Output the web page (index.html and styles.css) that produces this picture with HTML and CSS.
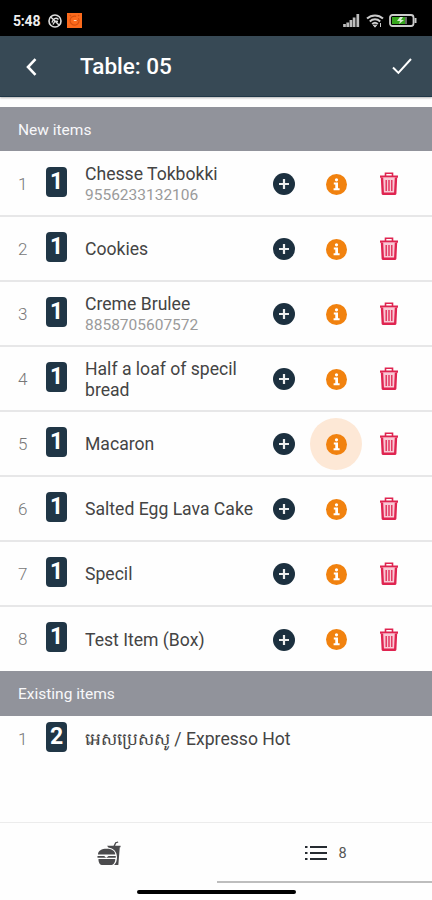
FILE: index.html
```
<!DOCTYPE html>
<html lang="en">
<head>
    <meta charset="UTF-8">
    <meta name="viewport" content="width=device-width, initial-scale=1.0">
    <title>Table: 05</title>
    <link rel="stylesheet" href="styles.css">
</head>
<body>
    <svg class="sprite" width="0" height="0">
        <symbol id="icon-add" viewBox="0 0 22 22">
            <circle cx="11" cy="11" r="11" fill="#1c303f"/>
            <path d="M11 6v10M6 11h10" stroke="#eee" stroke-width="2.2"/>
        </symbol>
        <symbol id="icon-info" viewBox="0 0 21 21">
            <circle cx="10.5" cy="10.5" r="10.5" fill="#f1820f"/>
            <circle cx="10.5" cy="5.8" r="1.6" fill="#fff"/>
            <path d="M7.8 8.6h4.2v5.6h1.6v2h-6v-2h1.7v-3.6H7.800z" fill="#fff"/>
        </symbol>
        <symbol id="icon-trash" viewBox="0 0 20 24">
            <path d="M6.5 4V1.3h7V4" fill="none" stroke="#df2450" stroke-width="1.6"/>
            <path d="M1 4.6h18" stroke="#df2450" stroke-width="2.2"/>
            <path d="M3 5.5l.8 16.3h12.4L17 5.5" fill="#f9c9d5" stroke="#df2450" stroke-width="2.4" stroke-linejoin="round"/>
            <path d="M7.2 8v11M10 8v11M12.8 8v11" stroke="#df2450" stroke-width="1.3"/>
        </symbol>
    </svg>

    <div class="status-bar">
        <span class="time">5:48</span>
        <svg width="14" height="14" viewBox="0 0 14 14">
            <circle cx="7" cy="7" r="6" fill="none" stroke="#ddd" stroke-width="1.6"/>
            <path d="M2.5 2.8l9 8.6M4 8.5c1-4 4-5.5 6.5-3M5 10.5l2-3.5 3 .5" fill="none" stroke="#ddd" stroke-width="1.4"/>
        </svg>
        <svg class="app-icon" width="15" height="15" viewBox="0 0 15 15">
            <path d="M0 0h15v15H0z" fill="#fb6a1c"/>
            <path d="M4 3.2L2.8 2M11 3.2L12.2 2M11.4 5.2A4.5 4.5 0 1 1 9.2 3.4M7 7.5h4" fill="none" stroke="#d8500f" stroke-width="1.2"/>
            <path d="M6.8 7.5h2.8" stroke="#ffd8b8" stroke-width="1"/>
        </svg>
        <span class="spacer"></span>
        <svg width="17" height="13" viewBox="0 0 17 13">
            <path d="M1.5 13v-3M4.7 13V8.5M7.9 13V6M11.1 13V3.5M14.8 13V0" stroke="#bdbdbd" stroke-width="2.7"/>
        </svg>
        <svg class="wifi" width="18" height="14" viewBox="0 0 18 14">
            <path d="M1 4.6c4.6-4.3 11.4-4.3 16 0M3.8 7.4c3-2.8 7.4-2.8 10.4 0M6.2 10c1.7-1.5 3.9-1.5 5.6 0" fill="none" stroke="#ccc" stroke-width="2"/>
            <path d="M7.3 11.2h3.4L9 13.2zM14.5 9v4" fill="#ccc" stroke="#ccc"/>
        </svg>
        <svg width="28" height="13" viewBox="0 0 28 13">
            <rect x="1" y="1" width="23.5" height="11" rx="2.5" fill="none" stroke="#ccc" stroke-width="1.8"/>
            <path d="M25.5 4h2v5h-2z" fill="#ccc"/>
            <path d="M3 3h13v7H3z" fill="#36a51d"/>
            <path d="M11 3l-3 4h3l-1 3 5-4h-3l2-3z" fill="#d9f0d3"/>
            <path d="M17 3v7" stroke="#ccc" stroke-width="1"/>
        </svg>
    </div>

    <header>
        <svg width="11" height="18" viewBox="0 0 11 18">
            <path d="M9.5 1.2L2 9l7.5 7.8" fill="none" stroke="#fff" stroke-width="2.6"/>
        </svg>
        <h1>Table: 05</h1>
        <svg width="20" height="17" viewBox="0 0 20 17">
            <path d="M1 9.5l5.4 5.4L19 1" fill="none" stroke="#fff" stroke-width="2"/>
        </svg>
    </header>

    <h2 class="first">New items</h2>
    <ul class="items">
        <li>
            <span class="index">1</span><span class="qty">1</span>
            <div class="name">Chesse Tokbokki<small>9556233132106</small></div>
            <div class="actions">
                <svg class="add"><use href="#icon-add"/></svg>
                <span class="info"><svg><use href="#icon-info"/></svg></span>
                <svg class="trash"><use href="#icon-trash"/></svg>
            </div>
        </li>
        <li>
            <span class="index">2</span><span class="qty">1</span>
            <div class="name">Cookies</div>
            <div class="actions">
                <svg class="add"><use href="#icon-add"/></svg>
                <span class="info"><svg><use href="#icon-info"/></svg></span>
                <svg class="trash"><use href="#icon-trash"/></svg>
            </div>
        </li>
        <li>
            <span class="index">3</span><span class="qty">1</span>
            <div class="name">Creme Brulee<small>8858705607572</small></div>
            <div class="actions">
                <svg class="add"><use href="#icon-add"/></svg>
                <span class="info"><svg><use href="#icon-info"/></svg></span>
                <svg class="trash"><use href="#icon-trash"/></svg>
            </div>
        </li>
        <li>
            <span class="index">4</span><span class="qty">1</span>
            <div class="name">Half a loaf of specil bread</div>
            <div class="actions">
                <svg class="add"><use href="#icon-add"/></svg>
                <span class="info"><svg><use href="#icon-info"/></svg></span>
                <svg class="trash"><use href="#icon-trash"/></svg>
            </div>
        </li>
        <li>
            <span class="index">5</span><span class="qty">1</span>
            <div class="name">Macaron</div>
            <div class="actions">
                <svg class="add"><use href="#icon-add"/></svg>
                <span class="info pressed"><svg><use href="#icon-info"/></svg></span>
                <svg class="trash"><use href="#icon-trash"/></svg>
            </div>
        </li>
        <li>
            <span class="index">6</span><span class="qty">1</span>
            <div class="name">Salted Egg Lava Cake</div>
            <div class="actions">
                <svg class="add"><use href="#icon-add"/></svg>
                <span class="info"><svg><use href="#icon-info"/></svg></span>
                <svg class="trash"><use href="#icon-trash"/></svg>
            </div>
        </li>
        <li>
            <span class="index">7</span><span class="qty">1</span>
            <div class="name">Specil</div>
            <div class="actions">
                <svg class="add"><use href="#icon-add"/></svg>
                <span class="info"><svg><use href="#icon-info"/></svg></span>
                <svg class="trash"><use href="#icon-trash"/></svg>
            </div>
        </li>
        <li>
            <span class="index">8</span><span class="qty">1</span>
            <div class="name">Test Item (Box)</div>
            <div class="actions">
                <svg class="add"><use href="#icon-add"/></svg>
                <span class="info"><svg><use href="#icon-info"/></svg></span>
                <svg class="trash"><use href="#icon-trash"/></svg>
            </div>
        </li>
    </ul>

    <h2>Existing items</h2>
    <ul class="items existing">
        <li>
            <span class="index">1</span><span class="qty">2</span>
            <div class="name"><span class="khmer" lang="km">អេសប្រេសសូ</span> / Expresso Hot</div>
        </li>
    </ul>

    <nav class="tabs">
        <a href="#">
            <svg width="25" height="26" viewBox="0 0 26 26" fill="#4b4b4d">
                <path d="M1 13.5c0-4 4-6 9-6s9 2 9 6zM.5 15h7l2 2 2.5-2h7.5v1.8H.5zM1.5 18.2h17.5c0 4-2 6.300-5 6.300H6c-3 0-4.500-2.300-4.500-6.300z"/>
                <path d="M10.5 4.5h6.700L19 .8l2.800-.8.4 1-2.200.8-1.200 2.700h5.700V6h-.8l-1.500 18.500h-4.400c1.800-1.800 3-4 3-8 0-6-3.600-9.500-9-10.300z"/>
            </svg>
        </a>
        <a href="#" class="active">
            <svg width="22" height="16" viewBox="0 0 22 16">
                <path d="M0 2h2.500M0 8h2.500M0 14h2.500M5 2h17M5 8h17M5 14h17" stroke="#262b31" stroke-width="2.200"/>
            </svg>
            <span>8</span>
        </a>
    </nav>
    <div class="home-bar"></div>
</body>
</html>
```

FILE: styles.css
```
* {
    box-sizing: border-box;
}
body {
    font-family: Roboto, "Noto Sans", sans-serif;
    margin: 0;
    height: 900px;
    display: flex;
    flex-direction: column;
    background-color: #fefefe;
    overflow: hidden;
}
svg {
    display: block;
    flex: none;
}
.sprite {
    position: absolute;
}
.status-bar {
    height: 36px;
    padding: 5px 15px 0 13px;
    display: flex;
    align-items: center;
    background-color: #000;
    color: #eee;
}
.time {
    width: 35px;
    font-size: 14px;
    font-weight: 700;
    letter-spacing: -0.2px;
}
.app-icon {
    margin-left: 5px;
}
.spacer {
    flex: 1;
}
.wifi {
    margin: 0 5px 0 6px;
}
header {
    height: 61px;
    padding: 1px 20px 0 26px;
    display: flex;
    align-items: center;
    background-color: #374955;
    border-bottom: 1px solid #203747;
    box-shadow: 0 1px 2px rgba(0, 0, 0, 0.3);
}
h1 {
    flex: 1;
    margin: 0 0 1px 43px;
    font-size: 22.5px;
    font-weight: 500;
    color: #fff;
}
h2 {
    height: 45px;
    margin: 0;
    padding-left: 18px;
    font-size: 15.5px;
    font-weight: 400;
    line-height: 46px;
    color: #f8f8fa;
    background-color: #91939b;
}
h2.first {
    height: 44px;
    margin-top: 10px;
}
.items {
    list-style: none;
    margin: 0;
    padding: 1px 0 0;
}
.items li {
    height: 65px;
    padding: 0 33px 0 18px;
    display: flex;
    align-items: center;
    border-bottom: 2px solid #e7e7e8;
}
.items li:last-child {
    height: 64px;
    border-bottom: 0;
}
.index {
    width: 28px;
    font-size: 17px;
    font-weight: 300;
    color: #777;
}
.qty {
    width: 21px;
    height: 30px;
    margin-bottom: 4px;
    border-radius: 4px;
    background-color: #203646;
    color: #fff;
    font-size: 23px;
    font-weight: 700;
    line-height: 30px;
    text-align: center;
}
.name {
    flex: 1;
    margin-left: 18px;
    padding-top: 2px;
    font-size: 17.6px;
    line-height: 21px;
    color: #444;
}
.name small {
    display: block;
    font-size: 15.5px;
    color: #9a9a9a;
}
.khmer {
    font-size: 17px;
}
.actions {
    width: 126px;
    padding-top: 1px;
    display: flex;
    align-items: center;
    justify-content: space-between;
}
.add {
    width: 22px;
    height: 22px;
}
.info {
    width: 52px;
    height: 52px;
    margin-right: 2px;
    display: flex;
    align-items: center;
    justify-content: center;
    border-radius: 50%;
}
.info svg {
    width: 21px;
    height: 21px;
}
.pressed {
    background-color: #fde8d6;
}
.trash {
    width: 20px;
    height: 24px;
}
.existing {
    padding: 0;
}
.existing li:last-child {
    height: 45px;
}
.tabs {
    height: 61px;
    margin-top: auto;
    display: flex;
    border-top: 1px solid #ececec;
}
.tabs a {
    width: 217px;
    padding: 2px 0 0 1px;
    display: flex;
    align-items: center;
    justify-content: center;
    color: #555;
    font-size: 14.5px;
    text-decoration: none;
}
.tabs .active {
    flex: 1;
    gap: 11px;
    padding-left: 3px;
    border-bottom: 2px solid #bdbdbd;
}
.home-bar {
    width: 159px;
    height: 4px;
    margin: 7px 0 6px 137px;
    flex: none;
    border-radius: 2px;
    background-color: #000;
}
```
